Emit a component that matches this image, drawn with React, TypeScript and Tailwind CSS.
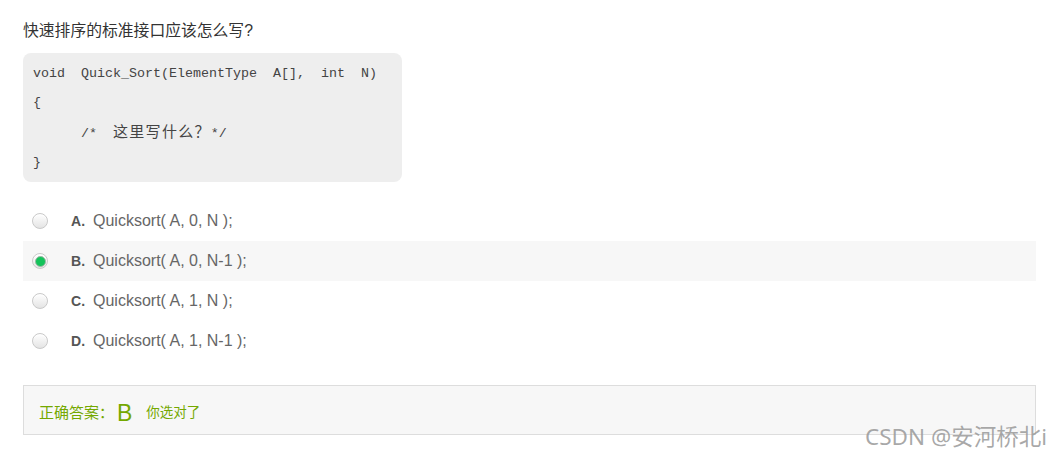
import React from "react";

const options = [
  { key: "A", text: "Quicksort( A, 0, N );" },
  { key: "B", text: "Quicksort( A, 0, N-1 );", selected: true },
  { key: "C", text: "Quicksort( A, 1, N );" },
  { key: "D", text: "Quicksort( A, 1, N-1 );" },
];

function Radio({ checked }: { checked?: boolean }) {
  return (
    <div className="w-[16px] h-[16px] rounded-full border border-[#c9c9c9] bg-gradient-to-b from-[#ffffff] to-[#e4e4e4] flex items-center justify-center shadow-[inset_0_1px_1px_rgba(255,255,255,0.9)]">
      {checked && (
        <div className="w-[11px] h-[11px] rounded-full bg-[#14c35a] border border-[#9bb8a5]" />
      )}
    </div>
  );
}

export default function App() {
  const mono = { fontFamily: '"Liberation Mono", "Noto Sans CJK SC", monospace' };
  return (
    <div
      className="relative w-[1060px] h-[455px] bg-white overflow-hidden pl-[23px] pr-[24px] pt-[21px]"
      style={{ fontFamily: '"Liberation Sans", Arial, "Noto Sans CJK SC", sans-serif' }}
    >
      <div className="text-[15.8px] leading-[20px] text-[#333]">快速排序的标准接口应该怎么写?</div>
      <div
        className="mt-[12px] w-[379px] h-[129px] rounded-[8px] bg-[#eeeeee] pl-[10px] pt-[7px] text-[13.33px] leading-[28.5px] text-[#444] whitespace-pre"
        style={mono}
      >
        <div>void  Quick_Sort(ElementType  A[],  int  N)</div>
        <div>{"{"}</div>
        <div>{"      /*  "}<span className="text-[15px] tracking-[1.3px]" style={{ fontFamily: '"Noto Sans CJK SC", sans-serif' }}>这里写什么？</span>{"*/"}</div>
        <div>{"}"}</div>
      </div>
      <div className="mt-[19px]">
        {options.map((o) => (
          <div
            key={o.key}
            className={`h-[40px] flex items-center pl-[9px] ${o.selected ? "bg-[#f7f7f7]" : ""}`}
          >
            <Radio checked={o.selected} />
            <span className="ml-[23px] w-[22px] font-bold text-[14px] text-[#555]">{o.key}.</span>
            <span className="text-[16px] text-[#666]">{o.text}</span>
          </div>
        ))}
      </div>
      <div className="mt-[24px] h-[50px] border border-[#dddddd] bg-[#f7f7f7] flex items-center pl-[15px] pt-[6px] text-[#74a800]">
        <span className="text-[15px]">正确答案：</span>
        <span className="text-[23px] ml-[3px] leading-none">B</span>
        <span className="text-[13.5px] ml-[14px]">你选对了</span>
      </div>
      <div
        className="absolute right-[13px] top-[423px] text-[22.5px] leading-[28px] text-[#999999]/85"
        style={{ fontFamily: '"Noto Sans", "Noto Sans CJK SC", sans-serif' }}
      >
        CSDN @安河桥北i
      </div>
    </div>
  );
}
